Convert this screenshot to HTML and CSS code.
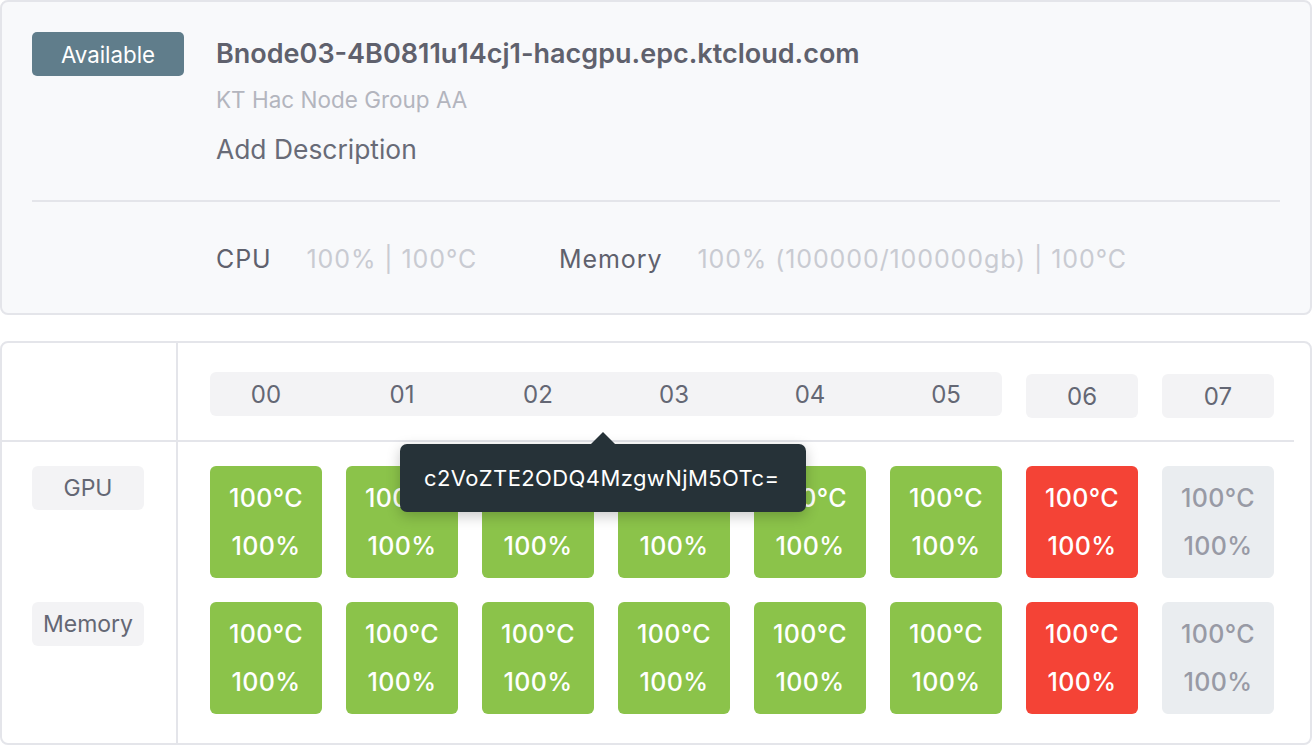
FILE: index.html
```html
<!DOCTYPE html>
<html lang="en">
<head>
<meta charset="utf-8">
<title>Node detail</title>
<link rel="stylesheet" href="styles.css">
</head>
<body>
<section class="node-card">
  <div class="node-head">
    <span class="status-badge">Available</span>
    <div class="node-info">
      <h1 class="node-name">Bnode03-4B0811u14cj1-hacgpu.epc.ktcloud.com</h1>
      <p class="node-group">KT Hac Node Group AA</p>
      <p class="node-desc">Add Description</p>
    </div>
  </div>
  <hr class="node-divider">
  <div class="node-stats">
    <div class="stat"><span class="stat-label">CPU</span><span class="stat-value">100% | 100°C</span></div>
    <div class="stat"><span class="stat-label">Memory</span><span class="stat-value">100% (100000/100000gb) | 100°C</span></div>
  </div>
</section>

<section class="device-card">
  <div class="dev-head">
    <div class="dev-left"></div>
    <div class="dev-right">
      <div class="idx-group">
        <span class="idx">00</span><span class="idx">01</span><span class="idx">02</span><span class="idx">03</span><span class="idx">04</span><span class="idx">05</span>
      </div>
      <span class="idx idx-pill">06</span>
      <span class="idx idx-pill">07</span>
    </div>
  </div>
  <div class="dev-body">
    <div class="dev-left body-left">
      <span class="row-label">GPU</span>
      <span class="row-label">Memory</span>
    </div>
    <div class="dev-right body-right">
      <div class="cell-row">
        <div class="cell ok"><span>100°C</span><span>100%</span></div>
        <div class="cell ok"><span>100°C</span><span>100%</span></div>
        <div class="cell ok"><span>100°C</span><span>100%</span></div>
        <div class="cell ok"><span>100°C</span><span>100%</span></div>
        <div class="cell ok"><span>100°C</span><span>100%</span></div>
        <div class="cell ok"><span>100°C</span><span>100%</span></div>
        <div class="cell hot"><span>100°C</span><span>100%</span></div>
        <div class="cell off"><span>100°C</span><span>100%</span></div>
      </div>
      <div class="cell-row">
        <div class="cell ok"><span>100°C</span><span>100%</span></div>
        <div class="cell ok"><span>100°C</span><span>100%</span></div>
        <div class="cell ok"><span>100°C</span><span>100%</span></div>
        <div class="cell ok"><span>100°C</span><span>100%</span></div>
        <div class="cell ok"><span>100°C</span><span>100%</span></div>
        <div class="cell ok"><span>100°C</span><span>100%</span></div>
        <div class="cell hot"><span>100°C</span><span>100%</span></div>
        <div class="cell off"><span>100°C</span><span>100%</span></div>
      </div>
    </div>
  </div>
  <div class="tooltip">c2VoZTE2ODQ4MzgwNjM5OTc=</div>
</section>
</body>
</html>
```
FILE: styles.css
```css
* { box-sizing: border-box; }
html, body { margin: 0; padding: 0; }
body {
  width: 1312px;
  height: 746px;
  overflow: hidden;
  background: #ffffff;
  font-family: "Inter", "Noto Sans", sans-serif;
  color: #60636f;
}

/* ---------- top card ---------- */
.node-card {
  height: 315px;
  background: #f8f9fb;
  border: 2px solid #e4e5ea;
  border-radius: 8px;
  padding: 30px 30px 0 30px;
}
.node-head {
  display: flex;
  gap: 32px;
}
.status-badge {
  flex: none;
  width: 152px;
  height: 44px;
  background: #607d8b;
  color: #ffffff;
  border-radius: 5px;
  display: flex;
  align-items: center;
  justify-content: center;
  font-size: 22.3px;
}
.node-info { display: flex; flex-direction: column; }
.node-name {
  margin: 0;
  font-size: 27px;
  line-height: 44px;
  font-weight: 600;
  color: #5f616d;
}
.node-group {
  margin: 12px 0 0 0;
  font-size: 22.5px;
  line-height: 24px;
  color: #b3b5be;
}
.node-desc {
  margin: 23px 0 0 0;
  font-size: 26.4px;
  line-height: 28px;
  color: #686b77;
}
.node-divider {
  margin: 37px 0 0 0;
  border: 0;
  height: 2px;
  background: #e4e5ea;
}
.node-stats {
  display: flex;
  gap: 82px;
  margin: 41px 0 0 184px;
}
.stat { display: flex; gap: 35px; }
.stat-label {
  font-size: 25px;
  line-height: 32px;
  color: #5f616d;
  letter-spacing: 0.9px;
}
.stat-value {
  font-size: 25px;
  line-height: 32px;
  color: #c9cbd2;
  letter-spacing: 0.9px;
}

/* ---------- device card ---------- */
.device-card {
  position: relative;
  margin-top: 26px;
  height: 404px;
  background: #ffffff;
  border: 2px solid #e4e5ea;
  border-radius: 8px;
  padding-right: 16px;
  display: flex;
  flex-direction: column;
}
.dev-head {
  display: flex;
  height: 99px;
  border-bottom: 2px solid #e4e5ea;
}
.dev-body { display: flex; flex: 1; }
.dev-left {
  flex: none;
  width: 176px;
  border-right: 2px solid #e4e5ea;
}
.dev-right {
  flex: 1;
  padding-left: 32px;
}
.dev-head .dev-right {
  display: flex;
  align-items: flex-start;
  gap: 24px;
  padding-top: 29px;
}
.idx-group {
  display: flex;
  gap: 24px;
  background: #f3f3f5;
  border-radius: 6px;
}
.idx {
  width: 112px;
  height: 44px;
  display: flex;
  align-items: center;
  justify-content: center;
  font-size: 24px;
  color: #646774;
}
.idx-pill {
  background: #f3f3f5;
  border-radius: 6px;
  margin-top: 2px;
}
.body-left {
  display: flex;
  flex-direction: column;
  gap: 92px;
  padding: 24px 0 0 30px;
}
.row-label {
  width: 112px;
  height: 44px;
  background: #f3f3f5;
  border-radius: 6px;
  display: flex;
  align-items: center;
  justify-content: center;
  font-size: 23px;
  color: #646774;
}
.body-right {
  display: flex;
  flex-direction: column;
  gap: 24px;
  padding-top: 24px;
}
.cell-row { display: flex; gap: 24px; }
.cell {
  width: 112px;
  height: 112px;
  border-radius: 6px;
  display: flex;
  flex-direction: column;
  align-items: center;
  justify-content: center;
  font-size: 25px;
  font-weight: 500;
  line-height: 48px;
  letter-spacing: 0.4px;
}
.cell.ok { background: #8bc34a; color: #ffffff; }
.cell.hot { background: #f44336; color: #ffffff; }
.cell.off { background: #eaedf0; color: #989aa5; }

.tooltip {
  position: absolute;
  top: 101px;
  left: 398px;
  width: 406px;
  height: 68px;
  padding-left: 24px;
  display: flex;
  align-items: center;
  background: #263238;
  color: #ffffff;
  border-radius: 7px;
  font-size: 22px;
  letter-spacing: 0.4px;
  box-shadow: 0 4px 14px rgba(0, 0, 0, 0.22);
}
.tooltip::before {
  content: "";
  position: absolute;
  top: -12px;
  left: 191px;
  border-left: 12px solid transparent;
  border-right: 12px solid transparent;
  border-bottom: 12px solid #263238;
}
```
